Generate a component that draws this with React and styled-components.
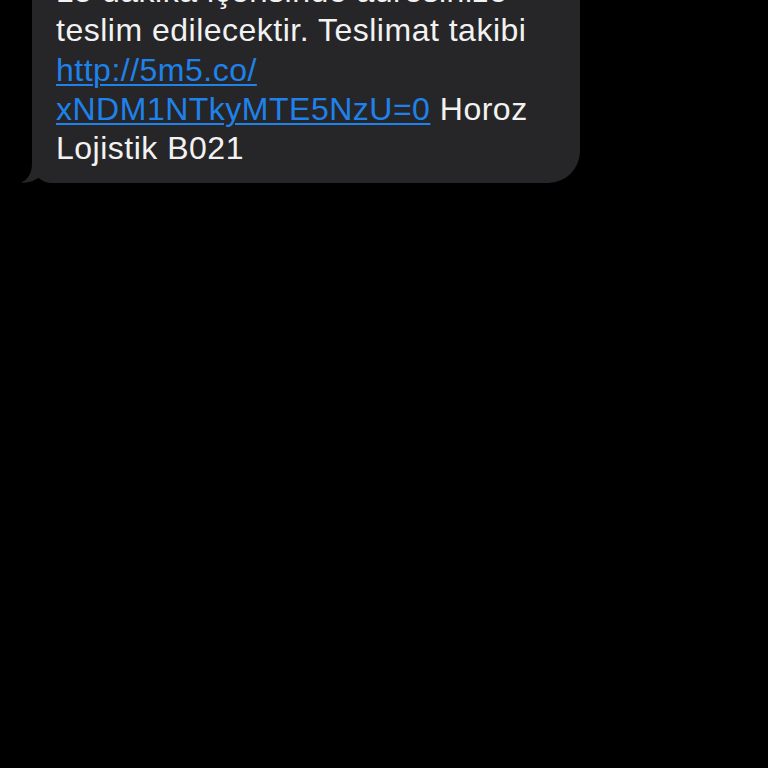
import React from 'react';
import styled, { createGlobalStyle } from 'styled-components';

const Global = createGlobalStyle`
  html, body {
    margin: 0;
    padding: 0;
    background: #000;
  }
  body {
    width: 768px;
    height: 768px;
    overflow: hidden;
  }
`;

const Screen = styled.div`
  width: 768px;
  height: 768px;
  background: #000;
  overflow: hidden;
  display: flex;
  flex-direction: column;
  align-items: flex-start;
  padding-left: 32px;
  box-sizing: border-box;
`;

const Bubble = styled.div`
  position: relative;
  margin-top: -28px;
  width: 548px;
  box-sizing: border-box;
  background: #262628;
  border-radius: 0 0 32px 20px;
  padding: 0 16px 15px 24px;
  color: #f2f2f2;
  font-family: 'Liberation Sans', Arial, sans-serif;
  font-size: 32px;
  line-height: 39.3px;
  letter-spacing: 0.5px;
  white-space: nowrap;
`;

const Tail = styled.svg`
  position: absolute;
  left: -12px;
  bottom: 0;
  display: block;
`;

const Link = styled.a`
  color: #1f82ea;
  text-decoration: underline;
  text-decoration-thickness: 2px;
  text-underline-offset: 3px;
`;

function App() {
  return (
    <Screen>
      <Global />
      <Bubble>
        15 dakika içerisinde adresinize
        <br />
        teslim edilecektir. Teslimat takibi
        <br />
        <Link href="#">http://5m5.co/</Link>
        <br />
        <Link href="#">xNDM1NTkyMTE5NzU=0</Link> Horoz
        <br />
        Lojistik B021
        <Tail width="40" height="30" viewBox="0 0 40 30">
          <path
            d="M12 6 L12 10 C12 20 8 27 1 29.5 C7 30.5 14 28 20 24 L34 8 Z"
            fill="#262628"
          />
        </Tail>
      </Bubble>
    </Screen>
  );
}

export default App;
